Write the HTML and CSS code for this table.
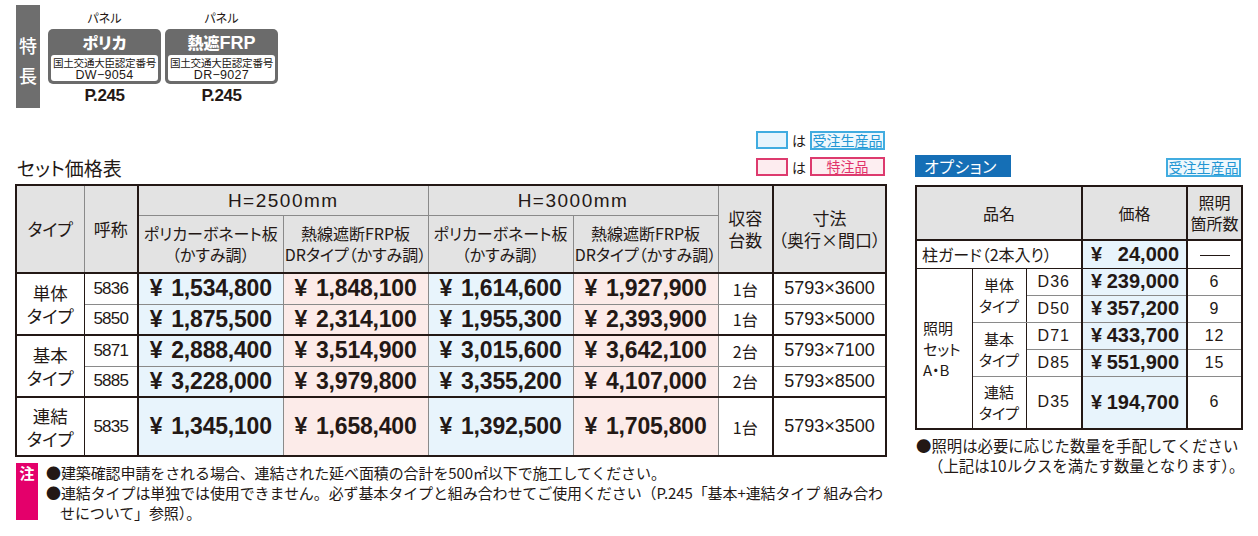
FILE: index.html
```html
<!DOCTYPE html>
<html lang="ja">
<head>
<meta charset="utf-8">
<link rel="stylesheet" href="styles.css">
</head>
<body>
<div class="page">
  <div class="features">
    <div class="feat-tag"><span>特</span><span>長</span></div>
    <div class="panel">
      <div class="panel-cap">パネル</div>
      <div class="panel-box">
        <div class="panel-name">ポリカ</div>
        <div class="panel-cert"><span class="cert-lbl">国土交通大臣認定番号</span><span class="cert-no">DW−9054</span></div>
      </div>
      <div class="panel-page">P.245</div>
    </div>
    <div class="panel panel-2">
      <div class="panel-cap">パネル</div>
      <div class="panel-box">
        <div class="panel-name">熱遮<span class="lat">FRP</span></div>
        <div class="panel-cert"><span class="cert-lbl">国土交通大臣認定番号</span><span class="cert-no">DR−9027</span></div>
      </div>
      <div class="panel-page">P.245</div>
    </div>
  </div>

  <div class="main">
    <div class="left">
      <div class="legend-row">
        <span class="swatch swatch-blue"></span><span class="ha">は</span><span class="tag tag-blue">受注生産品</span>
      </div>
      <div class="title-row">
        <h2 class="title">セット価格表</h2>
        <div class="legend-inline">
          <span class="swatch swatch-pink"></span><span class="ha">は</span><span class="tag tag-pink">特注品</span>
        </div>
      </div>
      <table class="price">
        <colgroup>
          <col class="c-type"><col class="c-code"><col class="c-p"><col class="c-p"><col class="c-p"><col class="c-p"><col class="c-qty"><col class="c-dim">
        </colgroup>
        <thead>
          <tr class="h1">
            <th rowspan="2" class="big">タイプ</th>
            <th rowspan="2" class="big">呼称</th>
            <th colspan="2" class="tl hmm">H=2500mm</th>
            <th colspan="2" class="hmm">H=3000mm</th>
            <th rowspan="2" class="big">収容<br>台数</th>
            <th rowspan="2" class="tl big">寸法<br>（奥行×間口）</th>
          </tr>
          <tr class="h2">
            <th class="tl">ポリカーボネート板<br>（かすみ調）</th>
            <th>熱線遮断FRP板<br>DRタイプ（かすみ調）</th>
            <th>ポリカーボネート板<br>（かすみ調）</th>
            <th>熱線遮断FRP板<br>DRタイプ（かすみ調）</th>
          </tr>
        </thead>
        <tbody>
          <tr class="r tt">
            <td rowspan="2" class="type">単体<br>タイプ</td>
            <td class="code">5836</td>
            <td class="pr blue tl"><span class="yen">¥</span>1,534,800</td>
            <td class="pr pink"><span class="yen">¥</span>1,848,100</td>
            <td class="pr blue"><span class="yen">¥</span>1,614,600</td>
            <td class="pr pink"><span class="yen">¥</span>1,927,900</td>
            <td class="qty">1台</td>
            <td class="dim tl">5793×3600</td>
          </tr>
          <tr class="r">
            <td class="code">5850</td>
            <td class="pr blue tl"><span class="yen">¥</span>1,875,500</td>
            <td class="pr pink"><span class="yen">¥</span>2,314,100</td>
            <td class="pr blue"><span class="yen">¥</span>1,955,300</td>
            <td class="pr pink"><span class="yen">¥</span>2,393,900</td>
            <td class="qty">1台</td>
            <td class="dim tl">5793×5000</td>
          </tr>
          <tr class="r tt">
            <td rowspan="2" class="type">基本<br>タイプ</td>
            <td class="code">5871</td>
            <td class="pr blue tl"><span class="yen">¥</span>2,888,400</td>
            <td class="pr pink"><span class="yen">¥</span>3,514,900</td>
            <td class="pr blue"><span class="yen">¥</span>3,015,600</td>
            <td class="pr pink"><span class="yen">¥</span>3,642,100</td>
            <td class="qty">2台</td>
            <td class="dim tl">5793×7100</td>
          </tr>
          <tr class="r">
            <td class="code">5885</td>
            <td class="pr blue tl"><span class="yen">¥</span>3,228,000</td>
            <td class="pr pink"><span class="yen">¥</span>3,979,800</td>
            <td class="pr blue"><span class="yen">¥</span>3,355,200</td>
            <td class="pr pink"><span class="yen">¥</span>4,107,000</td>
            <td class="qty">2台</td>
            <td class="dim tl">5793×8500</td>
          </tr>
          <tr class="r rl tt">
            <td class="type">連結<br>タイプ</td>
            <td class="code">5835</td>
            <td class="pr blue tl"><span class="yen">¥</span>1,345,100</td>
            <td class="pr pink"><span class="yen">¥</span>1,658,400</td>
            <td class="pr blue"><span class="yen">¥</span>1,392,500</td>
            <td class="pr pink"><span class="yen">¥</span>1,705,800</td>
            <td class="qty">1台</td>
            <td class="dim tl">5793×3500</td>
          </tr>
        </tbody>
      </table>
      <div class="notes">
        <div class="note-mark">注</div>
        <div class="note-text">
          ●建築確認申請をされる場合、連結された延べ面積の合計を500㎡以下で施工してください。<br>
          ●連結タイプは単独では使用できません。必ず基本タイプと組み合わせてご使用ください（P.245「基本+連結タイプ 組み合わ<br>
          <span class="indent">せについて」参照）。</span>
        </div>
      </div>
    </div>

    <div class="right">
      <div class="opt-head">
        <div class="opt-label">オプション</div>
        <span class="tag tag-blue">受注生産品</span>
      </div>
      <table class="opt">
        <colgroup>
          <col class="o1"><col class="o2"><col class="o3"><col class="o4"><col class="o5">
        </colgroup>
        <thead>
          <tr class="oh">
            <th colspan="3">品名</th>
            <th class="tl">価格</th>
            <th class="tl">照明<br>箇所数</th>
          </tr>
        </thead>
        <tbody>
          <tr class="or1 tt">
            <td colspan="3" class="oname">柱ガード（2本入り）</td>
            <td class="opr blue tl"><span class="oyen">¥</span><span>24,000</span></td>
            <td class="onum tl"><span class="dash"></span></td>
          </tr>
          <tr class="orr tk">
            <td rowspan="5" class="oset">照明<br>セット<br>A・B</td>
            <td rowspan="2" class="otype">単体<br>タイプ</td>
            <td class="od">D36</td>
            <td class="opr blue tl"><span>¥</span><span>239,000</span></td>
            <td class="onum tl">6</td>
          </tr>
          <tr class="orr">
            <td class="od">D50</td>
            <td class="opr blue tl"><span>¥</span><span>357,200</span></td>
            <td class="onum tl">9</td>
          </tr>
          <tr class="orr tk">
            <td rowspan="2" class="otype">基本<br>タイプ</td>
            <td class="od">D71</td>
            <td class="opr blue tl"><span>¥</span><span>433,700</span></td>
            <td class="onum tl">12</td>
          </tr>
          <tr class="orr">
            <td class="od">D85</td>
            <td class="opr blue tl"><span>¥</span><span>551,900</span></td>
            <td class="onum tl">15</td>
          </tr>
          <tr class="orl tk">
            <td class="otype">連結<br>タイプ</td>
            <td class="od">D35</td>
            <td class="opr blue tl"><span>¥</span><span>194,700</span></td>
            <td class="onum tl">6</td>
          </tr>
        </tbody>
      </table>
      <div class="opt-note">
        ●照明は必要に応じた数量を手配してください<br>
        <span class="indent2">（上記は10ルクスを満たす数量となります）。</span>
      </div>
    </div>
  </div>
</div>
</body>
</html>
```

FILE: styles.css
```css
* { box-sizing: border-box; }
body {
  margin: 0;
  background: #fff;
  color: #231815;
  font-family: "Noto Sans CJK JP", "Noto Sans", sans-serif;
  font-feature-settings: "palt";
}
.page { width: 1258px; height: 536px; padding: 5px 0 0 15px; overflow: hidden; }

/* features */
.features { display: flex; align-items: flex-start; height: 103px; }
.feat-tag {
  margin-left: 1px; width: 24px; height: 103px; background: #6e6e6e; color: #fff;
  font-size: 18px; font-weight: 500; line-height: 30px; display: flex; flex-direction: column; align-items: center;
  padding-top: 25px;
}
.panel { margin-left: 8px; width: 113px; display: flex; flex-direction: column; align-items: center; }
.panel-2 { margin-left: 4px; }
.panel-cap { font-size: 12px; line-height: 14px; margin-top: 6px; height: 18px; }
.panel-box { width: 113px; height: 55px; background: #6b6b6b; border-radius: 5px; padding: 0 3px 3px; display: flex; flex-direction: column; }
.panel-name { height: 26px; line-height: 26px; text-align: center; color: #fff; font-weight: 900; font-size: 16px; }
.panel-name .lat { font-family: "Liberation Sans", sans-serif; font-weight: bold; font-size: 18px; }
.panel-cert { flex: 1; background: #fff; border-radius: 3px; text-align: center; display: flex; flex-direction: column; align-items: center; justify-content: center; }
.cert-lbl { font-size: 10.6px; line-height: 13px; font-feature-settings: normal; letter-spacing: -0.3px; white-space: nowrap; }
.cert-no { font-family: "Liberation Sans", sans-serif; font-size: 12.5px; line-height: 12px; letter-spacing: 0.3px; }
.panel-page { font-family: "Liberation Sans", sans-serif; font-weight: bold; font-size: 17px; line-height: 18px; margin-top: 3px; letter-spacing: -0.4px; }

/* main */
.main { display: flex; gap: 30px; margin-top: 23px; }
.left { width: 870px; }
.right { width: 326px; padding-top: 24px; }

.legend-row { display: flex; justify-content: flex-end; align-items: center; height: 18px; }
.title-row { display: flex; justify-content: space-between; align-items: flex-end; margin-top: 8px; height: 21px; }
.title { margin: 0; font-weight: normal; font-size: 19px; line-height: 21px; margin-left: 2px; }
.legend-inline { display: flex; align-items: center; height: 19px; margin-bottom: 2px; }
.swatch { display: inline-block; width: 32px; height: 18px; border: 2px solid; }
.swatch-blue { border-color: #41ace0; background: #e7f4fc; }
.swatch-pink { border-color: #dd3a6e; background: #fdecef; }
.ha { font-size: 14px; margin: 0 4px; line-height: 18px; }
.tag { display: inline-block; width: 75px; height: 19px; border: 2px solid; font-size: 14px; line-height: 15px; text-align: center; }
.tag-blue { border-color: #41ace0; color: #2296d3; background: #eef8fd; }
.tag-pink { border-color: #dd3a6e; color: #e1326b; background: #fdeef1; }

/* main price table */
table { border-collapse: collapse; table-layout: fixed; }
.price { width: 870px; margin-top: 6px; border: 2px solid #231815; }
.c-type { width: 68px; } .c-code { width: 54px; } .c-p { width: 145px; } .c-qty { width: 55px; } .c-dim { width: 113px; }
.price th, .price td { border: 1px solid #8a8a8a; padding: 0; text-align: center; }
.price th { background: #e3e3e3; font-weight: normal; font-size: 16px; line-height: 21px; }
.price th.big { font-size: 17px; line-height: 22px; }
.price .h1 { height: 30px; }
.price .h2 { height: 58px; }
.price .hmm { font-family: "Liberation Sans", sans-serif; font-size: 19px; letter-spacing: 1.5px; }
.price thead tr.h2 th { border-bottom: 2px solid #231815; }
.price thead tr.h1 th[rowspan] { border-bottom: 2px solid #231815; }
.price .tl { border-left: 2px solid #231815; }
.price tr.tt td { border-top: 2px solid #231815; }
.price .r { height: 31px; }
.price .rl { height: 59px; }
.price td.type { font-size: 17.5px; line-height: 23px; border-right: 1px solid #231815; }
.price td.code { font-family: "Liberation Sans", sans-serif; font-size: 17px; letter-spacing: -0.8px; }
.price td.pr { font-family: "Liberation Sans", sans-serif; font-weight: bold; font-size: 23px; letter-spacing: -0.2px; }
.yen { margin-right: 9px; }
.blue { background: #e8f4fc; }
.pink { background: #fcebe9; }
.price td.qty { font-size: 16px; }
.price td.dim { font-family: "Liberation Sans", sans-serif; font-size: 18px; letter-spacing: 0; }

/* notes */
.notes { display: flex; margin-top: 6px; }
.note-mark { width: 22px; height: 57px; margin-left: 1px; background: #e4006b; color: #fff; font-weight: bold; font-size: 15px; line-height: 20px; text-align: center; }
.note-text { margin-left: 8px; font-size: 15px; line-height: 20px; white-space: nowrap; font-feature-settings: normal; letter-spacing: -0.1px; }
.indent { padding-left: 14px; }

/* option */
.opt-head { display: flex; justify-content: space-between; align-items: flex-end; height: 22px; }
.opt-label { width: 96px; height: 22px; background: #156fb6; color: #fff; font-size: 16px; line-height: 22px; padding-left: 9px; letter-spacing: 0.5px; }
.opt { width: 326px; margin-top: 8px; border: 2px solid #231815; }
.o1 { width: 56px; } .o2 { width: 54px; } .o3 { width: 56px; } .o4 { width: 105px; } .o5 { width: 55px; }
.opt th, .opt td { border: 1px solid #8a8a8a; padding: 0; text-align: center; }
.opt th { background: #e3e3e3; font-weight: normal; font-size: 16px; line-height: 21px; border-bottom: 2px solid #231815; }
.opt .tl { border-left: 2px solid #231815; }
.opt .oh { height: 54px; }
.opt .or1 { height: 28px; }
.opt .orr { height: 27px; }
.opt .orl { height: 53px; }
.opt tr.tk td { border-top: 1px solid #231815; }
.opt tr.or1 td { border-bottom: 1px solid #231815; }
.opt td.oname { text-align: left; padding-left: 5px; font-size: 16px; }
.opt td.oset { text-align: left; padding-left: 6px; font-size: 15px; line-height: 21px; border-right: 1px solid #231815; }
.opt td.otype { font-size: 15px; line-height: 21px; border-right: 1px solid #231815; }
.opt td.od { font-family: "Liberation Sans", sans-serif; font-size: 16px; letter-spacing: 1px; }
.opt td.opr { font-family: "Liberation Sans", sans-serif; font-weight: bold; font-size: 20px; padding: 0 7px 0 8px; }
.opt td.opr span:first-child { float: left; }
.opt td.opr span:last-child { float: right; }
.opt td.onum { font-family: "Liberation Sans", sans-serif; font-size: 16px; letter-spacing: 1px; }
.dash { display: inline-block; width: 30px; height: 1px; background: #231815; vertical-align: middle; }
.opt-note { margin-top: 5px; margin-left: 1px; font-size: 15.4px; line-height: 20px; white-space: nowrap; font-feature-settings: normal; }
.indent2 { padding-left: 12px; }
```
